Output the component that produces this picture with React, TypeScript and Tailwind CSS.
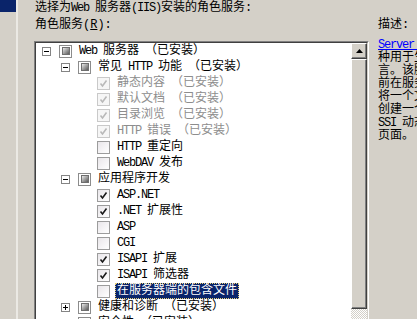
import * as React from "react"

type Kind = "tri" | "dis" | "off" | "on"

type Row = {
  level: 0 | 1 | 2
  exp?: "-" | "+"
  cb: Kind
  text: string
  gray?: boolean
  selected?: boolean
}

const ROWS: Row[] = [
  { level: 0, exp: "-", cb: "tri", text: "Web 服务器 （已安装）" },
  { level: 1, exp: "-", cb: "tri", text: "常见 HTTP 功能 （已安装）" },
  { level: 2, cb: "dis", text: "静态内容 （已安装）", gray: true },
  { level: 2, cb: "dis", text: "默认文档 （已安装）", gray: true },
  { level: 2, cb: "dis", text: "目录浏览 （已安装）", gray: true },
  { level: 2, cb: "dis", text: "HTTP 错误 （已安装）", gray: true },
  { level: 2, cb: "off", text: "HTTP 重定向" },
  { level: 2, cb: "off", text: "WebDAV 发布" },
  { level: 1, exp: "-", cb: "tri", text: "应用程序开发" },
  { level: 2, cb: "on", text: "ASP.NET" },
  { level: 2, cb: "on", text: ".NET 扩展性" },
  { level: 2, cb: "off", text: "ASP" },
  { level: 2, cb: "off", text: "CGI" },
  { level: 2, cb: "on", text: "ISAPI 扩展" },
  { level: 2, cb: "on", text: "ISAPI 筛选器" },
  { level: 2, cb: "off", text: "在服务器端的包含文件", selected: true },
  { level: 1, exp: "+", cb: "tri", text: "健康和诊断 （已安装）" },
  { level: 1, exp: "+", cb: "tri", text: "安全性 （已安装）" },
]

const INDENT = ["pl-[6px]", "pl-[25px]", "pl-[44px]"]

const DESC = [
  "种用于生成动态 HTML 的脚本语",
  "言。该脚本在页面传递到客户端之",
  "前在服务器上运行，通常包括",
  "将一个文件插入另一个文件。可以",
  "创建一个导航菜单，然后使用",
  "SSI 动态地将其添加到所有",
  "页面。",
]

// SimSun draws latin at half width, so squeeze the mono runs a bit
function Txt({ s }: { s: string }) {
  const parts = s.split(/([\x20-\x7e]+)/)
  return (
    <>
      {parts.map((p, i) =>
        /^[\x20-\x7e]+$/.test(p) ? (
          <span key={i} className="tracking-[-1.2px]">
            {p}
          </span>
        ) : (
          <React.Fragment key={i}>{p}</React.Fragment>
        )
      )}
    </>
  )
}

function Check({ color }: { color: string }) {
  return (
    <svg width="9" height="9" viewBox="0 0 9 9">
      <path d="M1.5 4.5 L3.5 7 L7.5 1.5" fill="none" stroke={color} strokeWidth="1.6" />
    </svg>
  )
}

function Box({ kind }: { kind: Kind }) {
  if (kind === "tri") {
    return (
      <span className="flex h-[13px] w-[13px] shrink-0 items-center justify-center border border-[#8c8c8c] bg-white">
        <span className="h-[8px] w-[8px] border border-[#6f6f6f] bg-linear-to-br from-[#ececec] to-[#5c5c5c]" />
      </span>
    )
  }
  if (kind === "dis") {
    return (
      <span className="flex h-[13px] w-[13px] shrink-0 items-center justify-center border border-[#c9c9c9] bg-[#f6f6f6]">
        <Check color="#b9b9b9" />
      </span>
    )
  }
  return (
    <span className="flex h-[13px] w-[13px] shrink-0 items-center justify-center border border-[#9c9c9c] bg-linear-to-br from-[#e9e6ea] to-white">
      {kind === "on" && <Check color="#1a1a1a" />}
    </span>
  )
}

function Expander({ sign }: { sign?: "-" | "+" }) {
  if (!sign) return <span className="w-[9px] shrink-0" />
  return (
    <span className="relative h-[9px] w-[9px] shrink-0 border border-[#848484] bg-white">
      <span className="absolute left-[1px] top-[3px] h-px w-[5px] bg-black" />
      {sign === "+" && <span className="absolute left-[3px] top-[1px] h-[5px] w-px bg-black" />}
    </span>
  )
}

function TreeRow({ row }: { row: Row }) {
  return (
    <div className={`flex h-[16px] items-center ${INDENT[row.level]}`}>
      <Expander sign={row.exp} />
      <span className="ml-[8px]">
        <Box kind={row.cb} />
      </span>
      <span
        className={
          row.selected
            ? "ml-[5px] whitespace-nowrap border border-dotted border-[#e8d27a] bg-[#0a246a] px-px leading-[14px] text-white"
            : `ml-[5px] whitespace-nowrap border border-transparent px-px leading-[14px] ${row.gray ? "text-[#8d8d8d]" : "text-black"}`
        }
      >
        <Txt s={row.text} />
      </span>
    </div>
  )
}

export default function App() {
  return (
    <div className="flex h-[319px] w-[417px] overflow-hidden bg-[#d4d0c8] font-['Liberation_Mono','Noto_Sans_CJK_SC',monospace] text-[12px] text-black">
      {/* left strip of the wizard */}
      <div className="flex w-[18px] shrink-0 flex-col border-r-2 border-r-[#ebe9e4]">
        <div className="h-[12px] bg-[#0a246a]" />
      </div>

      <div className="flex shrink-0 flex-col pl-[16px]">
        <div className="h-[16px] whitespace-nowrap pl-px leading-[16px]">
          <Txt s="选择为Web 服务器(IIS)安装的角色服务:" />
        </div>

        <div className="grid grid-cols-[335px_220px] gap-x-[9px]">
          <div className="flex flex-col">
            <div className="h-[18px] pl-px leading-[18px]">
              角色服务(<span className="underline">R</span>):
            </div>
            <div className="mt-[7px] h-[300px] border border-b-white border-l-[#808080] border-r-white border-t-[#808080]">
              <div className="flex h-full border border-b-[#d4d0c8] border-l-[#404040] border-r-[#d4d0c8] border-t-[#404040] bg-white">
                <div className="flex-1 overflow-hidden">
                  {ROWS.map((r) => (
                    <TreeRow key={r.text} row={r} />
                  ))}
                </div>
                <div className="flex w-[16px] flex-col">
                  <div className="flex h-[16px] items-center justify-center border border-b-[#404040] border-l-[#ffffff] border-r-[#404040] border-t-[#ffffff] bg-[#d4d0c8] shadow-[inset_-1px_-1px_0_#808080]">
                    <svg width="7" height="4" viewBox="0 0 7 4">
                      <polygon points="3.5,0 7,4 0,4" fill="#000" />
                    </svg>
                  </div>
                  <div className="h-[250px] border border-b-[#404040] border-l-[#ffffff] border-r-[#404040] border-t-[#ffffff] bg-[#d4d0c8] shadow-[inset_-1px_-1px_0_#808080]" />
                  <div className="flex-1 bg-[repeating-conic-gradient(#ffffff_0_25%,#d4d0c8_0_50%)] bg-[length:2px_2px]" />
                </div>
              </div>
            </div>
          </div>

          <div className="flex flex-col">
            <div className="h-[18px] leading-[18px]">描述:</div>
            <div className="mt-[5px] leading-[13px]">
              <div className="whitespace-nowrap">
                <span className="text-[#0000ff] underline">
                  <Txt s="Server Side Includes" />
                </span>{" "}
                <Txt s="(SSI) 是一" />
              </div>
              {DESC.map((line) => (
                <div key={line} className="whitespace-nowrap">
                  <Txt s={line} />
                </div>
              ))}
            </div>
          </div>
        </div>
      </div>
    </div>
  )
}
